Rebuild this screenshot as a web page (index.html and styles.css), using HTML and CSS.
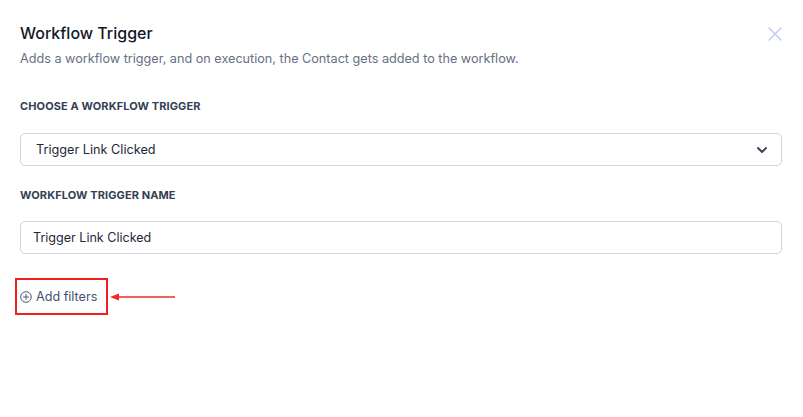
FILE: index.html
```html
<!DOCTYPE html>
<html>
<head>
<meta charset="utf-8">
<link rel="stylesheet" href="styles.css">
</head>
<body>
<div class="panel">
  <div class="header">
    <div class="titles">
      <h1 class="title">Workflow Trigger</h1>
      <p class="subtitle">Adds a workflow trigger, and on execution, the Contact gets added to the workflow.</p>
    </div>
    <button class="close" aria-label="Close">
      <svg width="14" height="14" viewBox="0 0 14 14"><path d="M1 1L13 13M13 1L1 13" stroke="#c3cbf5" stroke-width="1.5" stroke-linecap="round"/></svg>
    </button>
  </div>
  <div class="field first">
    <label class="label">CHOOSE A WORKFLOW TRIGGER</label>
    <div class="select">
      <span class="select-text">Trigger Link Clicked</span>
      <svg class="chev" width="10" height="6" viewBox="0 0 10 6"><path d="M1 1L5 5L9 1" fill="none" stroke="#344054" stroke-width="1.8" stroke-linecap="round" stroke-linejoin="round"/></svg>
    </div>
  </div>
  <div class="field second">
    <label class="label">WORKFLOW TRIGGER NAME</label>
    <div class="input">Trigger Link Clicked</div>
  </div>
  <div class="filters-row">
    <div class="add-filters">
      <svg width="12" height="12" viewBox="0 0 12 12"><circle cx="6" cy="6" r="5.3" fill="none" stroke="#4a5a75" stroke-width="1"/><path d="M6 3.2V8.8M3.2 6H8.8" stroke="#4a5a75" stroke-width="1"/></svg>
      <span>Add filters</span>
    </div>
    <svg class="arrow" width="66" height="10" viewBox="0 0 66 10"><path d="M8 5H65" stroke="#ee2a2a" stroke-width="1.4"/><path d="M0 5L9 1.5V8.5Z" fill="#ee2a2a"/></svg>
  </div>
</div>
</body>
</html>
```
FILE: styles.css
```css
* { box-sizing: border-box; }
body {
  margin: 0;
  background: #ffffff;
  font-family: Inter, "Noto Sans", sans-serif;
  color: #101828;
}
.panel {
  padding: 21px 21px 0 20px;
}
.header {
  display: flex;
  justify-content: space-between;
  align-items: flex-start;
}
.title {
  margin: 0;
  font-size: 16px;
  font-weight: 500;
  line-height: 24px;
  color: #101828;
}
.subtitle {
  margin: 4px 0 0;
  font-size: 12.65px;
  line-height: 20px;
  color: #667085;
}
.close {
  border: 0;
  background: none;
  padding: 0;
  margin: 6px 0 0 0;
  width: 14px;
  height: 14px;
  display: flex;
}
.field.first { margin-top: 29px; }
.field.second { margin-top: 21px; }
.label {
  display: block;
  font-size: 11px;
  font-weight: 700;
  line-height: 16px;
  color: #344054;
  letter-spacing: 0.1px;
}
.select, .input {
  height: 33px;
  border: 1px solid #d0d5dd;
  border-radius: 5px;
  display: flex;
  align-items: center;
  color: #1d2939;
}
.select {
  margin-top: 19px;
  justify-content: space-between;
  padding: 0 14px 0 15px;
  font-size: 12.7px;
}
.input {
  margin-top: 18px;
  padding: 0 12px;
  font-size: 12.55px;
}
.filters-row {
  margin-top: 24px;
  margin-left: -5px;
  display: flex;
  align-items: center;
}
.add-filters {
  display: flex;
  align-items: center;
  gap: 4px;
  width: 93px;
  height: 37px;
  border: 2px solid #ee2020;
  padding-left: 3px;
  font-size: 12.6px;
  color: #3f5472;
}
.arrow { margin-left: 2px; }
```
